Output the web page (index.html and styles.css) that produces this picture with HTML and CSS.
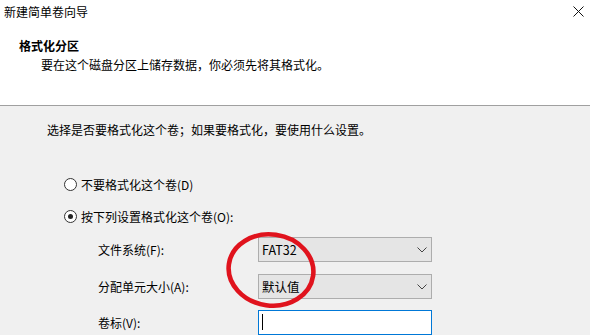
FILE: index.html
```html
<!DOCTYPE html>
<html lang="zh-CN">
<head>
    <meta charset="UTF-8">
    <title>新建简单卷向导</title>
    <link rel="stylesheet" href="styles.css">
</head>
<body>
    <div class="wizard">
        <div class="titlebar">
            <span class="title">新建简单卷向导</span>
            <svg class="close" width="11" height="11" viewBox="0 0 11 11">
                <path d="M0.5 0.5 L10.5 10.5 M10.5 0.5 L0.5 10.5" stroke="#111" stroke-width="1" fill="none"/>
            </svg>
        </div>

        <div class="header">
            <h1>格式化分区</h1>
            <p>要在这个磁盘分区上储存数据，你必须先将其格式化。</p>
        </div>

        <div class="content">
            <p class="intro">选择是否要格式化这个卷；如果要格式化，要使用什么设置。</p>

            <div class="radio-row first">
                <span class="radio"></span>
                <span>不要格式化这个卷(D)</span>
            </div>
            <div class="radio-row">
                <span class="radio radio-checked"></span>
                <span>按下列设置格式化这个卷(O):</span>
            </div>

            <div class="settings">
                <label>文件系统(F):</label>
                <div class="select">
                    <span>FAT32</span>
                    <svg width="10" height="6" viewBox="0 0 10 6"><path d="M0.5 0.5 L5 5 L9.5 0.5" stroke="#444" fill="none"/></svg>
                </div>
                <label>分配单元大小(A):</label>
                <div class="select">
                    <span>默认值</span>
                    <svg width="10" height="6" viewBox="0 0 10 6"><path d="M0.5 0.5 L5 5 L9.5 0.5" stroke="#444" fill="none"/></svg>
                </div>
                <label class="vol-label">卷标(V):</label>
                <div class="textbox"><span class="caret"></span></div>
            </div>

            <!-- hand-drawn highlight -->
            <svg class="mark" width="100" height="84" viewBox="0 0 100 84">
                <ellipse cx="50" cy="42" rx="42.5" ry="35.5" transform="rotate(8 50 42)" stroke="#e0131d" stroke-width="4.6" fill="none"/>
            </svg>
        </div>
    </div>
</body>
</html>
```

FILE: styles.css
```css
body {
    margin: 0;
    font-family: "Noto Sans CJK SC", "Noto Sans", sans-serif;
    font-size: 12px;
    color: #000;
    background: #f0f0f0;
}
.wizard {
    width: 590px;
    height: 335px;
    overflow: hidden;
    position: relative;
}
.titlebar {
    height: 24px;
    line-height: 24px;
    background: #fff;
    display: flex;
    justify-content: space-between;
    align-items: center;
    padding: 0 6px 0 4px;
}
.close {
    margin-top: -2px;
}
.header {
    background: #fff;
    height: 82px;
    box-sizing: border-box;
    padding: 13px 0 0 19px;
    border-bottom: 1px solid #a0a0a0;
}
.header h1 {
    margin: 0;
    font-size: 12px;
    line-height: 18px;
    font-weight: bold;
}
.header p {
    margin: 1px 0 0 22px;
    line-height: 18px;
}
.content {
    padding: 15px 0 0 47px;
}
.intro {
    margin: 0;
    line-height: 18px;
}
.radio-row {
    display: flex;
    align-items: center;
    height: 18px;
    margin: 14px 0 0 17px;
    gap: 4px;
}
.radio-row.first {
    margin-top: 36px;
}
.radio {
    width: 11px;
    height: 11px;
    border: 1px solid #333;
    border-radius: 50%;
    background: #fff;
    position: relative;
}
.radio-checked::after {
    content: "";
    position: absolute;
    left: 3px;
    top: 3px;
    width: 5px;
    height: 5px;
    border-radius: 50%;
    background: #222;
}
.settings {
    display: grid;
    grid-template-columns: 160px 174px;
    grid-auto-rows: 25px;
    row-gap: 12px;
    align-items: center;
    margin: 12px 0 0 51px;
}
.settings label {
    line-height: 18px;
}
.select {
    height: 25px;
    box-sizing: border-box;
    border: 1px solid #adadad;
    background: #e5e5e5;
    display: flex;
    align-items: center;
    justify-content: space-between;
    padding: 0 4px 0 3px;
    font-size: 12.5px;
}
.vol-label,
.textbox {
    margin-top: -2px;
}
.textbox {
    height: 25px;
    box-sizing: border-box;
    border: 1px solid #0078d7;
    background: #fff;
    padding: 3px 0 0 3px;
}
.caret {
    display: block;
    width: 1px;
    height: 16px;
    background: #000;
}
.mark {
    position: absolute;
    left: 221px;
    top: 228px;
}
```
